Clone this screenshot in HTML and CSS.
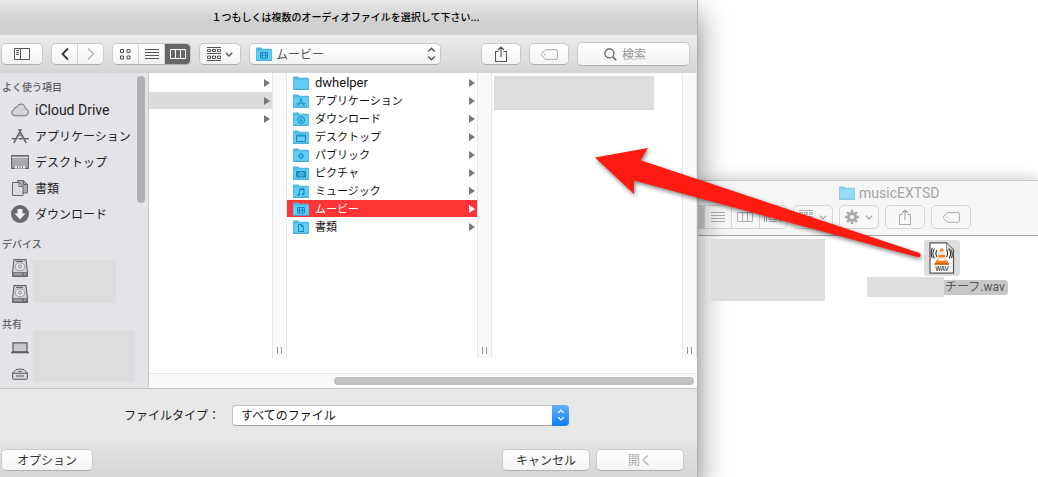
FILE: index.html
```html
<!DOCTYPE html>
<html lang="ja">
<head>
<meta charset="utf-8">
<title>オーディオファイルを選択</title>
<link rel="stylesheet" href="styles.css">
</head>
<body>
<svg class="sprite" aria-hidden="true">
  <symbol id="folder" viewBox="0 0 16 14">
    <path d="M0 1.5Q0 .5 1 .5h4.2l1.3 1.3H15q1 0 1 1V13.5H0z" fill="#4fb8e3"/>
    <path d="M.5 3.5h15v9.3H.5z" fill="#62cdf4"/>
    <path d="M0 13.3h16" stroke="#3fa4d3" stroke-width="1"/>
  </symbol>
  <symbol id="film" viewBox="0 0 16 14"><path d="M4.5 5.5h7v5.5h-7zM6.5 5.5V11M9.5 5.5V11M4.5 8.2h7" fill="none" stroke="#1787bd"/></symbol>
  <symbol id="apps" viewBox="0 0 20 18">
    <path d="M11 1.5L3.5 15.5M9 1.5l7.5 14M1.5 11.5h5M9 11.5h3.500M15 11.5h4" fill="none" stroke="currentColor" stroke-width="1.8" stroke-linecap="round"/>
    <path d="M7.500 8.500q3-2 5.500 1" fill="none" stroke="currentColor"/>
  </symbol>
  <symbol id="chev" viewBox="0 0 8 5"><path d="M.8.8L4 4 7.200.8" fill="none" stroke="currentColor" stroke-width="1.400"/></symbol>
  <symbol id="updown" viewBox="0 0 8 14"><path d="M.8 4.500L4 1.300l3.200 3.200M.8 9.500L4 12.700l3.200-3.200" fill="none" stroke="currentColor" stroke-width="1.500"/></symbol>
  <symbol id="list" viewBox="0 0 14 12"><path d="M0 1.500h14M0 4.500h14M0 7.500h14M0 10.500h14" stroke="currentColor"/></symbol>
  <symbol id="cols" viewBox="0 0 16 12"><path d="M.5 1.500h15v9H.5zM5.500 1.500v9M10.500 1.500v9" fill="none" stroke="currentColor"/></symbol>
  <symbol id="group" viewBox="0 0 14 14"><path d="M0 .5h14M0 6.500h14M0 13.500h14M.5 2.500h3v2h-3zM5.500 2.500h3v2h-3zM10.500 2.500h3v2h-3zM.5 9h3v2.500h-3zM5.500 9h3v2.500h-3zM10.500 9h3v2.500h-3z" fill="none" stroke="currentColor"/></symbol>
  <symbol id="share" viewBox="0 0 12 16"><path d="M3.500 5.500h-3v10h11v-10h-3M6 11V1.200M3 4l3-3 3 3" fill="none" stroke="currentColor" stroke-width="1.100"/></symbol>
  <symbol id="tag" viewBox="0 0 17 11"><path d="M4.500.6H15q1.400 0 1.400 1.400v7q0 1.400-1.400 1.400H4.500L.8 6.500q-.8-1 0-2z" fill="none" stroke="currentColor"/><circle cx="4" cy="5.500" r=".8" fill="currentColor"/></symbol>
  <symbol id="drive" viewBox="0 0 16 18">
    <path d="M2 .6h12l1.400 12v4.800H.6v-4.800z" fill="#d3d3d6" stroke="#66666a" stroke-width="1.100"/>
    <path d="M1 13h14v4H1z" fill="#77777b"/><path d="M3 14.200v2M5 14.200v2M7 14.200v2M9 14.200v2M12 15h1.500" stroke="#cfcfd2"/>
    <path d="M4 2.500h7" stroke="#66666a"/><ellipse cx="8" cy="7.800" rx="4.800" ry="4" fill="#e4e4e7" stroke="#909094" stroke-width=".8"/><circle cx="8" cy="7.600" r="1.500" fill="none" stroke="#77777b" stroke-width=".8"/>
  </symbol>
</svg>

<div class="desktop">
  <main class="dialog">
    <header class="titlebar">１つもしくは複数のオーディオファイルを選択して下さい...</header>

    <div class="toolbar">
      <button class="btn wide" aria-label="サイドバー"><svg width="16" height="12" viewBox="0 0 16 12"><path d="M.5.500h15v11H.5zM6.500.500v11M2 2.500h3M2 4.500h3M2 6.500h3" fill="none" stroke="#555"/></svg></button>
      <div class="seg">
        <button aria-label="戻る"><svg width="8" height="14" viewBox="0 0 8 14"><path d="M7 1.500L1.500 7 7 12.500" fill="none" stroke="#333" stroke-width="1.800"/></svg></button>
        <button aria-label="進む"><svg width="8" height="14" viewBox="0 0 8 14"><path d="M1 1.500L6.500 7 1 12.500" fill="none" stroke="#b5b5b5" stroke-width="1.300"/></svg></button>
      </div>
      <div class="seg">
        <button aria-label="アイコン"><svg width="11" height="11" viewBox="0 0 11 11"><path d="M.5.500h3v3h-3zM7 .5h3v3H7zM.5 7h3v3h-3zM7 7h3v3H7z" fill="none" stroke="#555"/></svg></button>
        <button aria-label="リスト"><svg width="14" height="12"><use href="#list"/></svg></button>
        <button class="on" aria-label="カラム"><svg width="16" height="12"><use href="#cols"/></svg></button>
      </div>
      <button class="btn wide" aria-label="グループ"><svg width="14" height="14"><use href="#group"/></svg><svg width="8" height="5"><use href="#chev"/></svg></button>
      <div class="place">
        <svg width="16" height="14"><use href="#folder"/><use href="#film"/></svg>
        <select aria-label="場所"><option>ムービー</option></select>
        <svg width="9" height="14"><use href="#updown"/></svg>
      </div>
      <span class="spacer"></span>
      <button class="btn" aria-label="共有"><svg width="12" height="16"><use href="#share"/></svg></button>
      <button class="btn dim" aria-label="タグ"><svg width="17" height="11"><use href="#tag"/></svg></button>
      <label class="search">
        <svg width="13" height="13" viewBox="0 0 13 13"><path d="M8.800 8.800l3.500 3.500" stroke="#555" stroke-width="1.300"/><circle cx="5.400" cy="5.400" r="4.500" fill="none" stroke="#555" stroke-width="1.100"/></svg>
        <input type="search" placeholder="検索" aria-label="検索">
      </label>
    </div>

    <div class="browser">
      <nav class="sidebar">
        <div class="places">
          <h2>よく使う項目</h2>
          <a href="#"><svg width="18" height="14" viewBox="0 0 18 14"><path d="M4 12.800q-3.300-.2-3.300-3.200 0-2.500 2.500-3 0-2.600 2.700-2.500Q7 1 10 1q4 .2 4.300 4.500 3.100.6 3.100 3.700t-3 3.600z" fill="#d4d4d8" stroke="#707074"/></svg><span class="latin large">iCloud Drive</span></a>
          <a href="#"><svg width="19" height="17"><use href="#apps"/></svg>アプリケーション</a>
          <a href="#"><svg width="18" height="14" viewBox="0 0 18 14"><path d="M.6.600h16.800v12.800H.6z" fill="#a9a9ad" stroke="#69696d" stroke-width="1.200"/><path d="M1 2.500h16" stroke="#d8d8db"/><path d="M4 11h10v2.500H4z" fill="#eee"/><path d="M6.500 11v2M9 11v2M11.500 11v2" stroke="#77777b"/></svg>デスクトップ</a>
          <a href="#"><svg width="18" height="18" viewBox="0 0 18 18"><path d="M6.500 1.500h6l4 4V14h-10z" fill="#aaaaae" stroke="#69696d"/><path d="M1.500 3.500H8l4 4v9H1.500z" fill="#dcdce0" stroke="#69696d"/><path d="M8 3.500v4h4M12.500 1.500v4h4" fill="none" stroke="#69696d"/></svg>書類</a>
          <a href="#"><svg width="18" height="18" viewBox="0 0 18 18"><circle cx="9" cy="9" r="9" fill="#69696d"/><path d="M6.500 4h5v4.500h3L9 14.500 3.500 8.500h3z" fill="#f0f0f2"/></svg>ダウンロード</a>
          <i class="thumb"></i>
        </div>
        <h2>デバイス</h2>
        <div class="volumes">
          <div class="marks"><svg width="16" height="18"><use href="#drive"/></svg><svg width="16" height="18"><use href="#drive"/></svg></div>
          <div class="mask devices"></div>
        </div>
        <h2>共有</h2>
        <div class="volumes">
          <div class="marks">
            <svg width="18" height="12" viewBox="0 0 18 12"><path d="M2 .8h14v9H2z" fill="#c8c8cc" stroke="#5c5c60" stroke-width="1.200"/><path d="M0 10.500h18" stroke="#5c5c60" stroke-width="1.600"/></svg>
            <svg width="16" height="12" viewBox="0 0 16 12"><path d="M.6 5L4 1.600Q8 .4 12 1.600L15.400 5v5.500q0 .8-1 .8H1.600q-1 0-1-.8z" fill="#d5d5d8" stroke="#5c5c60"/><path d="M.6 5.200h14.800M4 8h8" stroke="#5c5c60" stroke-width="1.100"/><path d="M6.500 3.500h3" stroke="#5c5c60"/></svg>
          </div>
          <div class="mask shared"></div>
        </div>
      </nav>

      <div class="finder-view">
        <div class="columns">
          <div class="column">
            <button aria-label="項目 1"></button>
            <button class="parent" aria-label="項目 2"></button>
            <button aria-label="項目 3"></button>
          </div>
          <div class="handle"></div>
          <div class="column">
            <button><svg width="16" height="14"><use href="#folder"/></svg><span class="latin">dwhelper</span></button>
            <button><svg width="16" height="14"><use href="#folder"/><use class="glyph" href="#apps" x="3" y="4" width="10" height="9"/></svg>アプリケーション</button>
            <button><svg width="16" height="14" viewBox="0 0 16 14"><use href="#folder" width="16" height="14"/><circle cx="8" cy="8" r="3.500" fill="none" stroke="#1787bd"/><path d="M8 6v3.500M6.300 8L8 9.700 9.700 8" fill="none" stroke="#1787bd"/></svg>ダウンロード</button>
            <button><svg width="16" height="14" viewBox="0 0 16 14"><use href="#folder" width="16" height="14"/><path d="M3.500 5h9v6.500h-9zM3.500 6h9" fill="none" stroke="#1787bd"/></svg>デスクトップ</button>
            <button><svg width="16" height="14" viewBox="0 0 16 14"><use href="#folder" width="16" height="14"/><path d="M8 4.500L11.500 8 8 11.500 4.500 8z" fill="#1f94ca"/><path d="M7 8h2" stroke="#62cdf4" stroke-width="2"/></svg>パブリック</button>
            <button><svg width="16" height="14" viewBox="0 0 16 14"><use href="#folder" width="16" height="14"/><path d="M3.500 5.500h9V11h-9z" fill="#1f94ca" stroke="#1787bd"/><circle cx="8.500" cy="8.200" r="1.800" fill="none" stroke="#7ad6f7"/></svg>ピクチャ</button>
            <button><svg width="16" height="14" viewBox="0 0 16 14"><use href="#folder" width="16" height="14"/><path d="M6.500 10.500V5l4.500-.6V10M6.500 6L11 5.500" fill="none" stroke="#1787bd"/><circle cx="5.700" cy="10.600" r="1.200" fill="#1787bd"/><circle cx="10.200" cy="10" r="1.200" fill="#1787bd"/></svg>ミュージック</button>
            <button class="selected"><svg width="16" height="14"><use href="#folder"/><use href="#film"/></svg>ムービー</button>
            <button><svg width="16" height="14" viewBox="0 0 16 14"><use href="#folder" width="16" height="14"/><path d="M5.500 4.500h3l2 2v5h-5zM8.500 4.500v2h2" fill="none" stroke="#1787bd"/></svg>書類</button>
          </div>
          <div class="handle"></div>
          <div class="column"><div class="mask preview"></div></div>
          <div class="handle"></div>
        </div>
        <div class="hscroll"><i></i></div>
      </div>
    </div>

    <form class="filetype">
      <label for="type">ファイルタイプ：</label>
      <div class="popup">
        <select id="type"><option>すべてのファイル</option></select>
        <span class="stepper"><svg width="8" height="12"><use href="#updown"/></svg></span>
      </div>
    </form>

    <footer class="actions">
      <button class="push">オプション</button>
      <span class="spacer"></span>
      <button class="push">キャンセル</button>
      <button class="push" disabled>開く</button>
    </footer>
  </main>

  <section class="window">
    <header>
      <h1><svg width="16" height="14"><use href="#folder"/></svg>musicEXTSD</h1>
      <div class="tools">
        <div class="views">
          <button class="on" aria-label="アイコン"></button>
          <button aria-label="リスト"><svg width="14" height="12"><use href="#list"/></svg></button>
          <button aria-label="カラム"><svg width="16" height="12"><use href="#cols"/></svg></button>
          <button aria-label="Cover Flow"><svg width="18" height="12" viewBox="0 0 18 12"><path d="M.5 1v10M2.500 1v10M5 1.500h8v7H5zM15.500 1v10M17.500 1v10M5 10.500h8" fill="none" stroke="currentColor"/></svg></button>
        </div>
        <button class="tool" aria-label="グループ"><svg width="14" height="14"><use href="#group"/></svg><svg width="8" height="5"><use href="#chev"/></svg></button>
        <button class="tool" aria-label="アクション"><svg width="14" height="14" viewBox="0 0 14 14"><path d="M7 0v14M0 7h14M2 2l10 10M12 2L2 12" stroke="currentColor" stroke-width="2.400"/><circle cx="7" cy="7" r="3.600" fill="#f6f6f6" stroke="currentColor" stroke-width="3"/></svg><svg width="8" height="5"><use href="#chev"/></svg></button>
        <button class="tool" aria-label="共有"><svg width="12" height="16"><use href="#share"/></svg></button>
        <button class="tool" aria-label="タグ"><svg width="17" height="11"><use href="#tag"/></svg></button>
      </div>
    </header>
    <div class="files">
      <div class="mask group"></div>
      <figure>
        <div class="thumbnail">
          <svg width="26" height="32" viewBox="0 0 26 32">
            <path d="M1 .8h16.500l7 7V31.200H1z" fill="#fdfdfd" stroke="#555" stroke-width="1.200"/>
            <path d="M17.500.8v7h7z" fill="#ddd" stroke="#777" stroke-width=".8"/>
            <path d="M7.500 18h10.500l2 4.200H5.500z" fill="#f07c16"/><path d="M5.500 21.500h14.500v1.200H5.500z" fill="#b94f08"/>
            <path d="M11.500 6.500h2.500l3.700 13q-5 2-10 0z" fill="#f58220"/>
            <path d="M10.600 9.500h4.300l.9 3.200H9.700zM8.900 15.500h7.800l.8 2.700q-4.500 1.500-9.300 0z" fill="#f5eee8"/>
            <path d="M8 8q-2.200 3.300 0 7M5.500 6.500q-3.300 5 0 10M3.200 6q-2 5 0 10M17.500 8q2.200 3.300 0 7M20 6.500q3.300 5 0 10M22.500 8.500q1.500 4 0 7.500" fill="none" stroke="#333" stroke-width="1.100"/>
            <text class="kind" x="13" y="29" text-anchor="middle">WAV</text>
          </svg>
        </div>
        <figcaption><span class="mask name"></span><span class="label">チーフ.wav</span></figcaption>
      </figure>
    </div>
  </section>

  <svg class="arrow" width="340" height="124" viewBox="590 140 340 124" aria-hidden="true">
    <path d="M595 157.500L648 148l-7.500 12.300L919.500 253q2 2 .5 4l-2 .3L634 180.500V194z" fill="#ff1a12"/>
  </svg>
</div>
</body>
</html>
```
FILE: styles.css
```css
* { box-sizing: border-box; }

body {
  margin: 0;
  background: #fff;
  color: #222;
  font: 12px/18px "Noto Sans CJK JP", sans-serif;
}

button, select, input { font: inherit; color: inherit; margin: 0; }
svg { flex: none; display: block; }
.sprite { position: absolute; width: 0; height: 0; }
.spacer { flex: 1; }
.mask { background: #ddd; }
.latin { font: 13px/18px Roboto, sans-serif; }
.latin.large { font-size: 14px; }

.desktop {
  position: relative;
  display: grid;
  grid-template-columns: minmax(0, 698fr) minmax(0, 340fr);
  min-height: 100vh;
  overflow: hidden;
}

/* Open dialog */
.dialog {
  z-index: 1;
  display: flex;
  flex-direction: column;
  background: #e8e8e8;
  border-right: 1px solid #b4b4b4;
  box-shadow: 0 14px 28px rgba(0, 0, 0, .5);
}

.titlebar {
  height: 35px;
  padding-right: 6px;
  background: linear-gradient(#e8e8e8, #d0d0d0 60%, #d2d2d2);
  color: #000;
  font-size: 10px;
  font-weight: 500;
  line-height: 34px;
  text-align: center;
  white-space: nowrap;
}

.toolbar {
  display: flex;
  align-items: center;
  gap: 8px;
  height: 38px;
  padding: 0 7px 0 1px;
  background: linear-gradient(#edebee, #d5d3d6);
}

.btn, .seg, .place, .search, .push {
  height: 22px;
  border: 1px solid #cbc9cc;
  border-bottom-color: #b0aeb1;
  border-radius: 5px;
  background: linear-gradient(#fff, #f3f3f3);
  color: #555;
}

.btn {
  display: flex;
  align-items: center;
  justify-content: center;
  gap: 4px;
  width: 40px;
  padding: 0;
}
.btn.wide { width: 42px; }
.btn.dim { color: #aaa; }

.seg { display: flex; overflow: hidden; }
.seg button {
  display: flex;
  align-items: center;
  justify-content: center;
  width: 26px;
  padding: 0;
  border: 0;
  background: none;
}
.seg button:first-child { width: 25px; }
.seg button + button { border-left: 1px solid #d5d5d5; }
.seg .on { background: #666; color: #fff; }

.place {
  display: flex;
  align-items: center;
  gap: 4px;
  flex: 0 1 192px;
  padding: 0 4px 0 6px;
}
.place select {
  flex: 1;
  min-width: 0;
  padding: 0;
  border: 0;
  background: none;
  appearance: none;
}

.search {
  display: flex;
  align-items: center;
  gap: 5px;
  width: 113px;
  height: 24px;
  padding-left: 26px;
}
.search input {
  width: 60px;
  padding: 0;
  border: 0;
  background: none;
  outline: 0;
}
.search input::placeholder { color: #999; }

.browser {
  display: grid;
  grid-template-columns: 149px minmax(0, 1fr);
  border-bottom: 1px solid #c6c6c6;
}

.sidebar {
  padding-bottom: 1px;
  border-right: 1px solid #c8c7ca;
  background: #e4e3e8;
}
.places { position: relative; }
.sidebar h2 {
  margin: 0;
  padding: 8px 2px 2px;
  color: #606064;
  font-size: 10px;
  font-weight: 500;
  line-height: 18px;
}
.places h2 { padding: 5px 2px 1px; }
.sidebar a {
  display: flex;
  align-items: center;
  gap: 6px;
  height: 26px;
  padding-left: 11px;
  color: #222;
  text-decoration: none;
  white-space: nowrap;
}
.sidebar a svg { width: 18px; color: #69696d; }
.thumb {
  position: absolute;
  top: 3px;
  right: 3px;
  width: 8px;
  height: 127px;
  border-radius: 4px;
  background: #b0b0b2;
}
.volumes { display: flex; align-items: center; }
.marks {
  display: grid;
  grid-auto-rows: 26px;
  place-items: center;
  width: 18px;
  margin: 0 4px 0 11px;
}
.devices { width: 83px; height: 43px; }
.shared { align-self: flex-start; width: 102px; height: 51px; margin-top: -4px; }

.finder-view {
  display: flex;
  flex-direction: column;
  background: #fff;
}
.columns {
  flex: 1;
  display: grid;
  grid-template-columns: minmax(0, 123fr) 15px minmax(0, 190fr) 15px minmax(0, 190fr) 15px;
  margin-bottom: 15px;
}
.column { padding-top: 1px; }
.column button {
  display: flex;
  align-items: center;
  gap: 6px;
  width: 100%;
  height: 17px;
  margin-bottom: 1px;
  padding: 0 2px 0 6px;
  border: 0;
  background: none;
  color: #111;
  font-size: 11px;
  line-height: 17px;
  white-space: nowrap;
}
.column .glyph { color: #1787bd; }
.column button::after {
  content: "";
  margin-left: auto;
  border: solid transparent;
  border-width: 4px 0 4px 6px;
  border-left-color: #777;
}
.column .parent { background: #dcdcdc; }
.column .selected { background: #ff3437; color: #fff; }
.column .selected::after { border-left-color: #fff; }
.preview { width: 160px; height: 34px; margin: 2px; }

.handle {
  display: flex;
  justify-content: center;
  align-items: flex-end;
  padding-bottom: 4px;
  border: solid #e6e6e6;
  border-width: 0 1px;
  background: #fafafa;
}
.handle::after {
  content: "";
  width: 3px;
  height: 7px;
  border: solid #999;
  border-width: 0 1px;
}

.hscroll {
  height: 15px;
  padding: 3px 3px 0 0;
  border-top: 1px solid #e8e8e8;
  background: #fafafa;
}
.hscroll i {
  display: block;
  width: 66%;
  height: 8px;
  margin-left: auto;
  border-radius: 4px;
  background: #c0c0c0;
}

.filetype {
  display: flex;
  align-items: center;
  height: 52px;
  padding-left: 124px;
}
.filetype label { flex: none; width: 108px; }
.popup {
  display: flex;
  width: 337px;
  height: 21px;
}
.popup select {
  flex: 1;
  padding: 0 8px;
  border: 1px solid #c0c0c0;
  border-right: 0;
  border-bottom-color: #a5a5a5;
  border-radius: 4px 0 0 4px;
  background: #fff;
  color: #111;
  line-height: 18px;
  appearance: none;
}
.stepper {
  display: grid;
  place-items: center;
  width: 17px;
  border-radius: 0 4px 4px 0;
  background: linear-gradient(#62b2f8, #0f7dfb);
  color: #fff;
}

.actions {
  flex: 1;
  display: flex;
  gap: 6px;
  min-height: 36px;
  padding: 8px 13px 6px 1px;
  background: linear-gradient(#e4e4e4, #d6d6d6);
}
.push {
  width: 88px;
  padding: 0;
  line-height: 18px;
  color: #333;
}
.push:first-child { width: 92px; }
.push:disabled { color: #aaa; }

/* Window behind the dialog */
.window {
  margin-top: 180px;
  border-top: 1px solid #c8c8c8;
  box-shadow: 0 0 14px rgba(0, 0, 0, .25);
  background: #fff;
}
.window header {
  height: 55px;
  border-bottom: 1px solid #aaa;
  background: #f6f6f6;
  color: #aaa;
}
.window h1 {
  display: flex;
  align-items: center;
  gap: 4px;
  margin: 0;
  padding-left: 141px;
  color: #a4a4a4;
  font: 14px/24px Roboto, sans-serif;
}
.window h1 svg { opacity: .65; }
.tools { display: flex; gap: 6px; }
.views, .tool {
  height: 24px;
  border: 1px solid #d6d6d6;
  border-radius: 5px;
  background: #f8f8f8;
}
.views {
  display: flex;
  overflow: hidden;
  width: 89px;
  border-left: 0;
  border-radius: 0 5px 5px 0;
}
.views button {
  display: grid;
  place-items: center;
  flex: 1;
  padding: 0;
  border: 0;
  border-left: 1px solid #d6d6d6;
  background: none;
}
.views .on { flex: 0 0 6px; background: #d0d0d0; }
.tool {
  display: flex;
  align-items: center;
  justify-content: center;
  gap: 6px;
  width: 40px;
  padding: 0;
}

.files {
  display: flex;
  gap: 42px;
  padding: 3px 0 0 13px;
}
.group { z-index: 2; width: 114px; height: 62px; }
.files figure { margin: 0; padding-top: 1px; }
.thumbnail {
  display: grid;
  place-items: center;
  width: 36px;
  height: 36px;
  margin-left: 57px;
  border-radius: 3px;
  background: #dedede;
}
.kind { fill: #222; font: 500 6px Inter, sans-serif; }
.files figcaption { display: flex; align-items: center; margin-top: 1px; }
.name { width: 77px; height: 20px; }
.label {
  padding: 0 3px 0 1px;
  border-radius: 0 3px 3px 0;
  background: #c8c8c8;
  color: #555;
  font: 12px/15px Roboto, "Noto Sans CJK JP", sans-serif;
  white-space: nowrap;
}

/* Pointer from the file to the dialog */
.arrow {
  position: absolute;
  z-index: 3;
  top: 140px;
  left: 590px;
  filter: drop-shadow(1px 2px 2px rgba(0, 0, 0, .5));
  pointer-events: none;
}
```
